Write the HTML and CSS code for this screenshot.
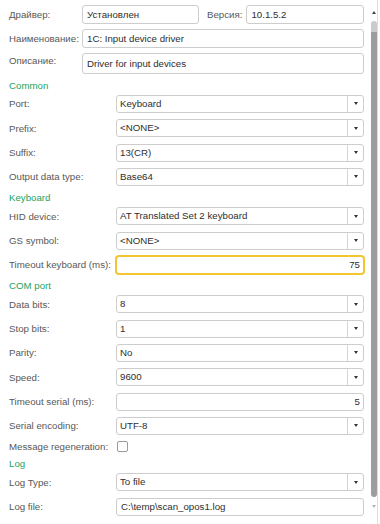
FILE: index.html
```html
<!DOCTYPE html>
<html lang="ru">
<head>
  <meta charset="UTF-8" />
  <title>Driver settings</title>
  <link rel="stylesheet" href="styles.css">
</head>
<body>
  <div class="window">
    <div class="form">
      <div class="head">
        <div class="hrow">
          <span class="lbl lbl-top">Драйвер:</span>
          <div class="field f-driver">Установлен</div>
          <span class="lbl lbl-ver">Версия:</span>
          <div class="field grow">10.1.5.2</div>
        </div>
        <div class="hrow">
          <span class="lbl lbl-top">Наименование:</span>
          <div class="field grow">1C: Input device driver</div>
        </div>
        <div class="hrow hrow-tall">
          <span class="lbl lbl-top lbl-up">Описание:</span>
          <div class="field grow field-tall">Driver for input devices</div>
        </div>
      </div>

      <div class="section-title">Common</div>
      <div class="row"><span class="lbl">Port:</span><div class="field select">Keyboard<span class="drop"></span></div></div>
      <div class="row"><span class="lbl">Prefix:</span><div class="field select">&lt;NONE&gt;<span class="drop"></span></div></div>
      <div class="row"><span class="lbl">Suffix:</span><div class="field select">13(CR)<span class="drop"></span></div></div>
      <div class="row"><span class="lbl">Output data type:</span><div class="field select">Base64<span class="drop"></span></div></div>

      <div class="section-title">Keyboard</div>
      <div class="row"><span class="lbl">HID device:</span><div class="field select">AT Translated Set 2 keyboard<span class="drop"></span></div></div>
      <div class="row"><span class="lbl">GS symbol:</span><div class="field select">&lt;NONE&gt;<span class="drop"></span></div></div>
      <div class="row"><span class="lbl">Timeout keyboard (ms):</span><div class="field number focused">75</div></div>

      <div class="section-title">COM port</div>
      <div class="row"><span class="lbl">Data bits:</span><div class="field select">8<span class="drop"></span></div></div>
      <div class="row"><span class="lbl">Stop bits:</span><div class="field select">1<span class="drop"></span></div></div>
      <div class="row"><span class="lbl">Parity:</span><div class="field select">No<span class="drop"></span></div></div>
      <div class="row"><span class="lbl">Speed:</span><div class="field select">9600<span class="drop"></span></div></div>
      <div class="row"><span class="lbl">Timeout serial (ms):</span><div class="field number">5</div></div>
      <div class="row"><span class="lbl">Serial encoding:</span><div class="field select">UTF-8<span class="drop"></span></div></div>
      <div class="row row-check"><span class="lbl">Message regeneration:</span><span class="checkbox"></span></div>

      <div class="section-title">Log</div>
      <div class="row"><span class="lbl">Log Type:</span><div class="field select">To file<span class="drop"></span></div></div>
      <div class="row"><span class="lbl">Log file:</span><div class="field">C:\temp\scan_opos1.log</div></div>
    </div>

    <div class="scrollbar">
      <span class="arrow-up"></span>
      <div class="thumb"></div>
      <span class="arrow-down"></span>
    </div>
  </div>
</body>
</html>
```

FILE: styles.css
```css
body {
  margin: 0;
  background: #fff;
  font-family: 'Liberation Sans', Arial, sans-serif;
  font-size: 9.7px;
  color: #333;
}

.window {
  display: flex;
  height: 524px;
  overflow: hidden;
}

.form {
  width: 355px;
  padding-left: 9px;
  flex: none;
}

/* top block: driver / name / description */
.head {
  display: flex;
  flex-direction: column;
  gap: 5px;
  padding-top: 5px;
  margin-bottom: 2.8px;
}

.hrow {
  display: flex;
  align-items: center;
  height: 19px;
}

.hrow-tall {
  height: 21px;
  align-items: flex-start;
}

.lbl {
  color: #585858;
  white-space: nowrap;
  flex: none;
  width: 107px;
}

.lbl-top { width: 73px; }
.lbl-up { padding-top: 2px; line-height: 12px; }
.lbl-ver { width: auto; margin: 0 4px 0 8px; }

.field {
  position: relative;
  box-sizing: border-box;
  height: 18px;
  line-height: 16px;
  padding: 0 4px;
  border: 1px solid #cdcdcd;
  border-radius: 3px;
  background: #fff;
  color: #2e2e2e;
  white-space: nowrap;
  overflow: hidden;
  flex: 1;
}

.hrow .field { height: 19px; line-height: 17px; }
.hrow .field-tall { height: 21px; line-height: 19px; }
.f-driver { flex: none; width: 117px; }

.select { padding-left: 3px; padding-right: 20px; }

.drop {
  position: absolute;
  top: 0;
  right: 0;
  width: 15px;
  height: 16px;
  border-left: 1px solid #d4d4d4;
  display: flex;
  align-items: center;
  justify-content: center;
}

.drop::after {
  content: "";
  border-left: 2.5px solid transparent;
  border-right: 2.5px solid transparent;
  border-top: 3px solid #333;
}

.number { text-align: right; padding-right: 3px; }

.focused {
  border-color: #f1c62e;
  box-shadow: 0 0 0 1px #f1c62e;
}

/* rows */
.row {
  display: flex;
  align-items: center;
  height: 24.33px;
}

.row-check { height: 17px; }

.checkbox {
  width: 9px;
  height: 9px;
  margin-left: 1px;
  border: 1px solid #9a9a9a;
  border-radius: 2px;
  background: #fff;
}

.section-title {
  height: 15px;
  box-sizing: border-box;
  padding-top: 3px;
  line-height: 12px;
  color: #23a35c;
}

/* scrollbar */
.scrollbar {
  margin-left: 6px;
  width: 8px;
  border-right: 1px solid #dedede;
  display: flex;
  flex-direction: column;
  align-items: center;
  padding-top: 11px;
  box-sizing: border-box;
}

.arrow-up {
  border-left: 2.5px solid transparent;
  border-right: 2.5px solid transparent;
  border-bottom: 3px solid #444;
}

.thumb {
  margin-top: 7px;
  width: 6px;
  height: 476px;
  border-radius: 3px;
  background: linear-gradient(#cbcbcb 0 11px, #9d9d9d 11px);
}

.arrow-down {
  margin-top: 8px;
  border-left: 2.5px solid transparent;
  border-right: 2.5px solid transparent;
  border-top: 3px solid #b5b5b5;
}
```
